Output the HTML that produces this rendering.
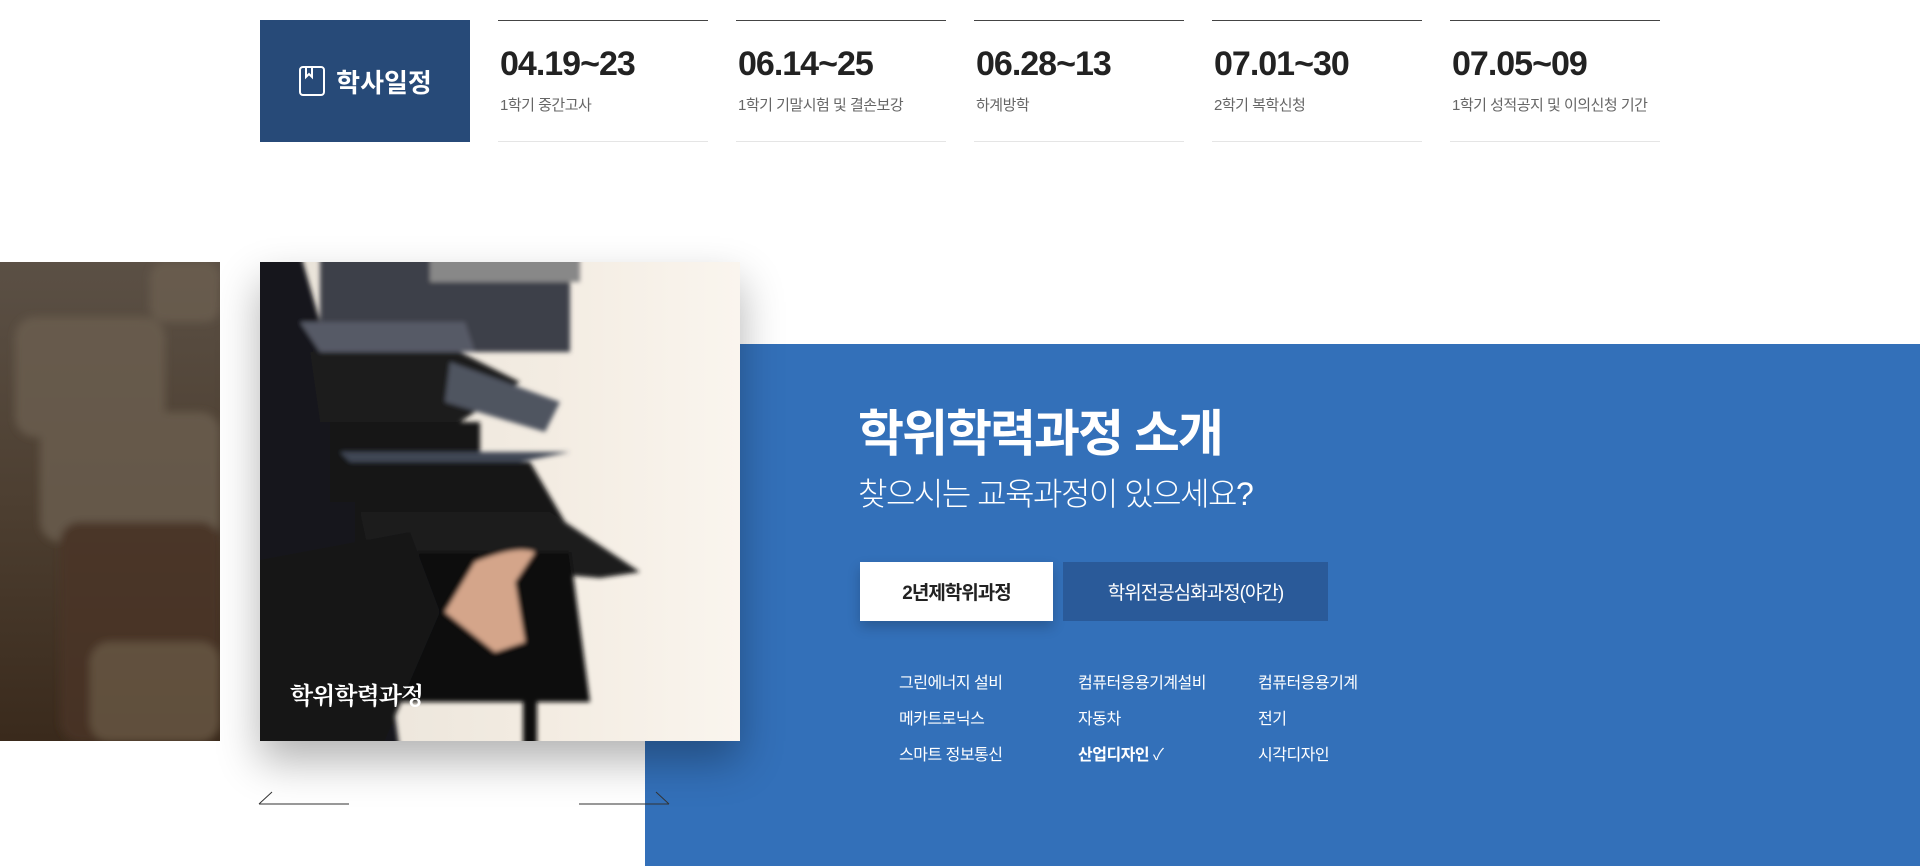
<!DOCTYPE html>
<html><head><meta charset="utf-8"><style>
*{margin:0;padding:0;box-sizing:border-box}
body{width:1920px;height:866px;overflow:hidden;background:#fff;font-family:"Liberation Sans","Noto Sans CJK KR",sans-serif;position:relative}
.abs{position:absolute}
.sched{left:260px;top:20px;width:210px;height:122px;background:#274a78;color:#fff;font-size:26px;font-weight:bold;display:flex;align-items:center;justify-content:center;gap:10px}
.item{top:20px;width:210px;height:122px;border-top:1px solid #444;border-bottom:1px solid #e5e5e5}
.item .d{position:absolute;left:2px;top:24px;font-size:34px;font-weight:bold;color:#222;letter-spacing:-1px}
.item .t{position:absolute;left:2px;top:73px;font-size:15px;color:#666;letter-spacing:-0.5px}
.blue{left:645px;top:344px;width:1275px;height:522px;background:#3370b9}
.list{font-size:16px;color:#fff;letter-spacing:-0.5px}
</style></head><body>
<div class="abs sched"><svg width="28" height="32" viewBox="0 0 28 32" fill="none" stroke="#fff" stroke-width="2"><rect x="2" y="2" width="24" height="28" rx="3"/><path d="M8 2v10l3-3 3 3V2"/></svg><span>학사일정</span></div>
<div class="abs item" style="left:498px"><div class="d">04.19~23</div><div class="t">1학기 중간고사</div></div>
<div class="abs item" style="left:736px"><div class="d">06.14~25</div><div class="t">1학기 기말시험 및 결손보강</div></div>
<div class="abs item" style="left:974px"><div class="d">06.28~13</div><div class="t">하계방학</div></div>
<div class="abs item" style="left:1212px"><div class="d">07.01~30</div><div class="t">2학기 복학신청</div></div>
<div class="abs item" style="left:1450px"><div class="d">07.05~09</div><div class="t">1학기 성적공지 및 이의신청 기간</div></div>

<div class="abs blue"></div>

<div class="abs" style="left:0;top:262px;width:220px;height:479px;overflow:hidden;background:linear-gradient(180deg,#5b5045 0%,#4d3f31 50%,#3a2a1c 100%)">
<svg width="220" height="479"><defs><filter id="b1"><feGaussianBlur stdDeviation="4"/></filter></defs><g filter="url(#b1)"><g fill="#6b5e50" opacity=".8"><rect x="15" y="55" width="150" height="120" rx="20"/><rect x="40" y="150" width="180" height="130" rx="20"/><rect x="60" y="260" width="160" height="220" rx="20" fill="#4a3626"/><rect x="150" y="0" width="70" height="60" rx="15"/><rect x="90" y="380" width="130" height="100" rx="20" fill="#6a5846"/></g></g></svg>
</div>

<div class="abs" style="left:260px;top:262px;width:480px;height:479px;overflow:hidden;background:linear-gradient(90deg,#e8e2d8 0%,#f3ece2 60%,#faf5ee 100%);box-shadow:0 20px 40px rgba(0,0,0,.3)">
<svg width="480" height="479" viewBox="0 0 480 479">
<defs><filter id="b2"><feGaussianBlur stdDeviation="2.5"/></filter></defs>
<g filter="url(#b2)">
<path d="M-10 -10h50l60 210 40 290H-10z" fill="#16181b"/>
<path d="M60 -10h250v100H60z" fill="#3d3f48"/>
<path d="M170 -10h150v30H170z" fill="#888"/>
<path d="M40 60h165l10 30H60z" fill="#565a66"/>
<path d="M50 90h150l60 30-60 40H60z" fill="#1a1a1c"/>
<path d="M190 100l110 40-15 30-100-30z" fill="#505460"/>
<path d="M70 160h150v80H70z" fill="#161616"/>
<path d="M80 190l230 0-50 10H90z" fill="#404654"/>
<path d="M95 200h175l35 60-60 120H95z" fill="#121212"/>
<path d="M100 250l190 0 90 60-40 6-230-20z" fill="#1d1d1f"/>
<path d="M110 290h200l20 150H130z" fill="#0f0f10"/>
<path d="M215 300c25-10 45-15 60-10l-20 30 10 60-30 10-50-40z" fill="#d4a58a"/>
<path d="M-10 300l160-30 30 80-60 139H-10z" fill="#131416"/>
<rect x="263" y="395" width="14" height="94" fill="#111"/>
</g>
</svg>
<div class="abs" style="left:30px;top:414px;color:#fff;font-size:24px;font-weight:bold;font-family:'Noto Serif CJK SC','Noto Sans CJK KR',serif;letter-spacing:-1px">학위학력과정</div>
</div>

<svg class="abs" style="left:258px;top:790px" width="92" height="16"><path d="M1 14h90M1 14L14 2" stroke="#333" fill="none"/></svg>
<svg class="abs" style="left:578px;top:790px" width="92" height="16"><path d="M1 14h90M91 14L78 2" stroke="#333" fill="none"/></svg>

<div class="abs" style="left:858px;top:409px;color:#fff;font-size:50px;font-weight:bold;letter-spacing:-2px;line-height:1">학위학력과정 소개</div>
<div class="abs" style="left:858px;top:478px;color:#fff;font-size:32px;font-weight:300;letter-spacing:-1.5px;line-height:1">찾으시는 교육과정이 있으세요?</div>

<div class="abs" style="left:860px;top:562px;width:193px;height:59px;background:#fff;color:#222;font-size:19px;font-weight:bold;display:flex;align-items:center;justify-content:center;letter-spacing:-1px;box-shadow:0 6px 12px rgba(0,0,0,.2)">2년제학위과정</div>
<div class="abs" style="left:1063px;top:562px;width:265px;height:59px;background:#2a5a99;color:#fff;font-size:19px;display:flex;align-items:center;justify-content:center;letter-spacing:-1px">학위전공심화과정(야간)</div>

<div class="abs list" style="left:899px;top:669px">그린에너지 설비</div>
<div class="abs list" style="left:1078px;top:669px">컴퓨터응용기계설비</div>
<div class="abs list" style="left:1258px;top:669px">컴퓨터응용기계</div>
<div class="abs list" style="left:899px;top:705px">메카트로닉스</div>
<div class="abs list" style="left:1078px;top:705px">자동차</div>
<div class="abs list" style="left:1258px;top:705px">전기</div>
<div class="abs list" style="left:899px;top:741px">스마트 정보통신</div>
<div class="abs list" style="left:1078px;top:741px;font-weight:bold">산업디자인 <span style="font-weight:normal">✓</span></div>
<div class="abs list" style="left:1258px;top:741px">시각디자인</div>
</body></html>
